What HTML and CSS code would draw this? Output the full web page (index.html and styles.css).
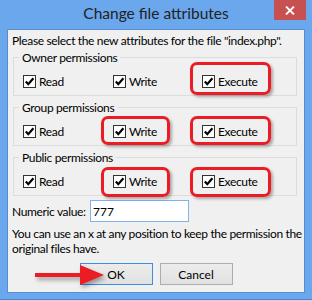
FILE: index.html
```html
<!DOCTYPE html>
<html lang="en">
<head>
  <meta charset="UTF-8" />
  <title>Change file attributes</title>
  <link rel="stylesheet" href="styles.css">
</head>
<body>
  <div class="window">
    <div class="titlebar">
      <span></span>
      <div class="title">Change file attributes</div>
      <button class="close-button" aria-label="Close">
        <svg width="10" height="9" viewBox="0 0 10 9"><path d="M1 0.5 L9 8.5 M9 0.5 L1 8.5" stroke="#fff" stroke-width="1.8"/></svg>
      </button>
    </div>

    <div class="panel">
      <p class="intro">Please select the new attributes for the file "index.php".</p>

      <fieldset class="perm-group">
        <legend>Owner permissions</legend>
        <div class="perm-row">
          <label class="check"><span class="box"><svg width="11" height="11" viewBox="0 0 11 11"><path d="M1.8 5.4 L4.3 8.2 L9.4 2.2" fill="none" stroke="#000" stroke-width="2.2"/></svg></span>Read</label>
          <label class="check"><span class="box"><svg width="11" height="11" viewBox="0 0 11 11"><path d="M1.8 5.4 L4.3 8.2 L9.4 2.2" fill="none" stroke="#000" stroke-width="2.2"/></svg></span>Write</label>
          <label class="check mark mark-tall"><span class="box"><svg width="11" height="11" viewBox="0 0 11 11"><path d="M1.8 5.4 L4.3 8.2 L9.4 2.2" fill="none" stroke="#000" stroke-width="2.2"/></svg></span>Execute</label>
        </div>
      </fieldset>

      <fieldset class="perm-group">
        <legend>Group permissions</legend>
        <div class="perm-row">
          <label class="check"><span class="box"><svg width="11" height="11" viewBox="0 0 11 11"><path d="M1.8 5.4 L4.3 8.2 L9.4 2.2" fill="none" stroke="#000" stroke-width="2.2"/></svg></span>Read</label>
          <label class="check mark"><span class="box"><svg width="11" height="11" viewBox="0 0 11 11"><path d="M1.8 5.4 L4.3 8.2 L9.4 2.2" fill="none" stroke="#000" stroke-width="2.2"/></svg></span>Write</label>
          <label class="check mark"><span class="box"><svg width="11" height="11" viewBox="0 0 11 11"><path d="M1.8 5.4 L4.3 8.2 L9.4 2.2" fill="none" stroke="#000" stroke-width="2.2"/></svg></span>Execute</label>
        </div>
      </fieldset>

      <fieldset class="perm-group">
        <legend>Public permissions</legend>
        <div class="perm-row">
          <label class="check"><span class="box"><svg width="11" height="11" viewBox="0 0 11 11"><path d="M1.8 5.4 L4.3 8.2 L9.4 2.2" fill="none" stroke="#000" stroke-width="2.2"/></svg></span>Read</label>
          <label class="check mark mark-low"><span class="box"><svg width="11" height="11" viewBox="0 0 11 11"><path d="M1.8 5.4 L4.3 8.2 L9.4 2.2" fill="none" stroke="#000" stroke-width="2.2"/></svg></span>Write</label>
          <label class="check mark mark-low"><span class="box"><svg width="11" height="11" viewBox="0 0 11 11"><path d="M1.8 5.4 L4.3 8.2 L9.4 2.2" fill="none" stroke="#000" stroke-width="2.2"/></svg></span>Execute</label>
        </div>
      </fieldset>

      <div class="value-row">
        <label class="value-label" for="numeric">Numeric value:</label>
        <input id="numeric" class="value-input" type="text" value="777">
      </div>

      <p class="help">You can use an x at any position to keep the permission the<br>original files have.</p>

      <div class="button-row">
        <svg class="arrow" width="80" height="28" viewBox="0 0 80 28">
          <rect x="5" y="12" width="47" height="4" fill="#ec1c24"/>
          <polygon points="50,4 50,24 74,14" fill="#ec1c24"/>
        </svg>
        <button class="dlg-button default">OK</button>
        <button class="dlg-button">Cancel</button>
      </div>
    </div>
  </div>
</body>
</html>
```

FILE: styles.css
```css
html, body {
  margin: 0;
  padding: 0;
  height: 100%;
  background: #6ba7ec;
  font-family: Lato, "Liberation Sans", sans-serif;
  font-size: 12px;
  line-height: 15px;
  letter-spacing: -0.35px;
  color: #000;
  overflow: hidden;
}

.window {
  height: 300px;
  box-sizing: border-box;
  border-bottom: 1px solid #4f86c9;
  display: flex;
  flex-direction: column;
}

.titlebar {
  height: 29px;
  display: grid;
  grid-template-columns: 1fr auto 1fr;
}

.title {
  font-size: 15.5px;
  line-height: 26px;
  letter-spacing: 0;
  color: #222;
  white-space: nowrap;
}

.close-button {
  justify-self: end;
  align-self: start;
  width: 32px;
  height: 20px;
  margin-right: 6px;
  padding: 0;
  border: 0;
  background: #c75050;
  display: flex;
  align-items: center;
  justify-content: center;
}

.panel {
  margin: 0 7px 0 7px;
  height: 264px;
  box-sizing: border-box;
  border: 1px solid #5a8dcf;
  background: #f0f0f0;
  padding: 3px 4px 0 4px;
  white-space: nowrap;
}

.intro {
  margin: 0 0 2px;
}

.perm-group {
  margin: 0 3px 4px 1px;
  padding: 9px 0 6px 9px;
  border: 1px solid #dcdcdc;
  min-width: 0;
}

.perm-group legend {
  padding: 0 3px;
  margin-left: -4px;
  line-height: 15px;
}

.perm-row {
  display: grid;
  grid-template-columns: 90px 89px auto;
  justify-items: start;
}

.check {
  position: relative;
  display: inline-flex;
  align-items: center;
  gap: 3px;
  height: 15px;
}

.box {
  width: 11px;
  height: 11px;
  border: 1px solid #333;
  background: #fff;
  display: flex;
}

/* red annotation boxes drawn over the screenshot */
.mark::after {
  content: "";
  position: absolute;
  left: -12px;
  right: -13px;
  top: -8px;
  bottom: -6px;
  border: 3px solid #ec1c24;
  border-radius: 7px;
  box-shadow: 2px 2px 3px rgba(0, 0, 0, 0.3);
  pointer-events: none;
}

.mark-tall::after {
  top: -12px;
  bottom: -6px;
}

.mark-low::after {
  top: -7px;
  bottom: -8px;
}

.value-row {
  display: flex;
  align-items: center;
  margin-top: 1px;
}

.value-label {
  width: 78px;
}

.value-input {
  width: 99px;
  height: 22px;
  box-sizing: border-box;
  border: 1px solid #7eb4ea;
  padding: 0 2px;
  font: inherit;
  background: #fff;
}

.help {
  margin: 4px 0 0;
}

.button-row {
  position: relative;
  display: flex;
  justify-content: center;
  gap: 7px;
  margin-top: 7px;
}

.dlg-button {
  width: 73px;
  height: 22px;
  padding: 0;
  font: inherit;
  color: #000;
  background: linear-gradient(#ececec, #e1e1e1);
  border: 1px solid #adadad;
}

.dlg-button.default {
  border-color: #3c8fe0;
}

.arrow {
  position: absolute;
  left: 18px;
  top: -2px;
  filter: drop-shadow(2px 3px 2px rgba(0, 0, 0, 0.35));
  z-index: 1;
}
```
